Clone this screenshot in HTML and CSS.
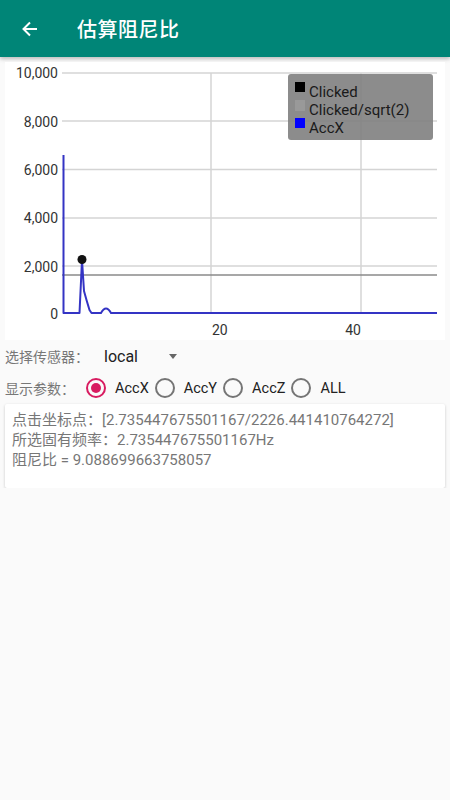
FILE: index.html
```html
<!DOCTYPE html>
<html lang="zh-CN">

<head>
    <meta charset="UTF-8">
    <title>估算阻尼比</title>
    <link rel="stylesheet" href="styles.css">
</head>

<body>
    <!-- 상단바 -->
    <div class="appbar">
        <svg class="back" width="18" height="18" viewBox="0 0 18 18">
            <path d="M16 9H3M9 2.5L2.5 9 9 15.5" fill="none" stroke="#fff" stroke-width="2"/>
        </svg>
        <span class="title">估算阻尼比</span>
    </div>

    <!-- 그래프 -->
    <div class="chart">
        <svg width="440" height="278" viewBox="5 62 440 278">
            <g stroke="#d4d4d4" stroke-width="1.5">
                <line x1="62" y1="73" x2="437" y2="73"/>
                <line x1="62" y1="121" x2="437" y2="121"/>
                <line x1="62" y1="169.5" x2="437" y2="169.5"/>
                <line x1="62" y1="218" x2="437" y2="218"/>
                <line x1="62" y1="266" x2="437" y2="266"/>
                <line x1="211" y1="73" x2="211" y2="313"/>
                <line x1="361" y1="73" x2="361" y2="313"/>
            </g>
            <line x1="62" y1="275" x2="437" y2="275" stroke="#8a8a8a" stroke-width="1.5"/>
            <g class="ylab" text-anchor="end">
                <text x="58" y="78">10,000</text>
                <text x="58" y="127">8,000</text>
                <text x="58" y="175">6,000</text>
                <text x="58" y="223">4,000</text>
                <text x="58" y="272">2,000</text>
                <text x="58" y="319">0</text>
            </g>
            <text class="ylab" x="212" y="335">20</text>
            <text class="ylab" x="361" y="335" text-anchor="end">40</text>
            <path d="M63.5 155V313H79.5L82 260L84 291L86.5 300L89.5 310L91.5 313H101Q106 304 111 313H437"
                  fill="none" stroke="#3434c4" stroke-width="2" stroke-linejoin="round"/>
            <circle cx="82" cy="259.5" r="4.5" fill="#111"/>

            <!-- 범례 -->
            <rect x="288" y="74" width="145" height="66" rx="3" fill="#808080" fill-opacity="0.9"/>
            <rect x="295" y="82" width="10" height="10" fill="#000"/>
            <rect x="295" y="100" width="10" height="11" fill="#999"/>
            <rect x="295" y="118" width="10" height="10" fill="#0000ff"/>
            <g class="legend">
                <text x="309" y="97">Clicked</text>
                <text x="309" y="115">Clicked/sqrt(2)</text>
                <text x="309" y="133">AccX</text>
            </g>
        </svg>
    </div>

    <!-- 센서 선택 -->
    <div class="row">
        <span class="label">选择传感器：</span>
        <span class="spinner">local</span>
        <span class="caret"></span>
    </div>

    <!-- 표시 파라미터 -->
    <div class="row">
        <span class="label">显示参数：</span>
        <div class="radios">
            <span class="radio on"></span><span class="rtext">AccX</span>
            <span class="radio"></span><span class="rtext">AccY</span>
            <span class="radio"></span><span class="rtext">AccZ</span>
            <span class="radio"></span><span class="rtext">ALL</span>
        </div>
    </div>

    <!-- 결과 카드 -->
    <div class="card">
        <p>点击坐标点：[2.735447675501167/2226.441410764272]</p>
        <p>所选固有频率：2.735447675501167Hz</p>
        <p>阻尼比 = 9.088699663758057</p>
    </div>
</body>

</html>
```

FILE: styles.css
```css
/* 공통 */
body {
    margin: 0;
    background: #fafafa;
    font-family: Roboto, "Noto Sans CJK SC", sans-serif;
}

/* 상단바 */
.appbar {
    height: 57px;
    background: #008577;
    display: flex;
    align-items: center;
    box-shadow: 0 2px 4px rgba(0, 0, 0, 0.25);
}

.back {
    margin-left: 21px;
}

.title {
    margin-left: 38px;
    color: #fff;
    font-size: 20px;
    font-weight: 500;
    font-family: "Noto Sans CJK SC", sans-serif;
    letter-spacing: 0.5px;
}

/* 그래프 */
.chart {
    margin: 5px 5px 0;
    height: 278px;
    background: #fff;
}

.chart svg {
    display: block;
}

.ylab {
    font-size: 14px;
    fill: #333;
}

.legend {
    font-size: 15px;
    fill: #1a1a1a;
}

/* 줄 */
.row {
    height: 32px;
    display: flex;
    align-items: center;
    padding-left: 5px;
}

.label {
    font-size: 14px;
    color: #777;
    font-family: "Noto Sans CJK SC", sans-serif;
}

.spinner {
    margin-left: 15px;
    font-size: 16px;
    color: #222;
}

.caret {
    margin-left: 31px;
    border-left: 4.5px solid transparent;
    border-right: 4.5px solid transparent;
    border-top: 5px solid #666;
}

/* 라디오 */
.radios {
    display: flex;
    align-items: center;
    margin-left: 11px;
}

.radio {
    width: 16px;
    height: 16px;
    border: 2px solid #757575;
    border-radius: 50%;
    box-sizing: content-box;
    position: relative;
}

.radio.on {
    border-color: #d81b60;
}

.radio.on::after {
    content: "";
    position: absolute;
    left: 3px;
    top: 3px;
    width: 10px;
    height: 10px;
    border-radius: 50%;
    background: #d81b60;
}

.rtext {
    margin: 0 6px 0 9px;
    font-size: 14.5px;
    color: #222;
}

/* 결과 카드 */
.card {
    margin: 0 5px;
    height: 84px;
    box-sizing: border-box;
    padding: 6px 7px;
    background: #fff;
    box-shadow: 0 1px 3px rgba(0, 0, 0, 0.2);
    border-radius: 2px;
}

.card p {
    margin: 0;
    font-size: 15px;
    line-height: 20px;
    color: #777;
}
```
